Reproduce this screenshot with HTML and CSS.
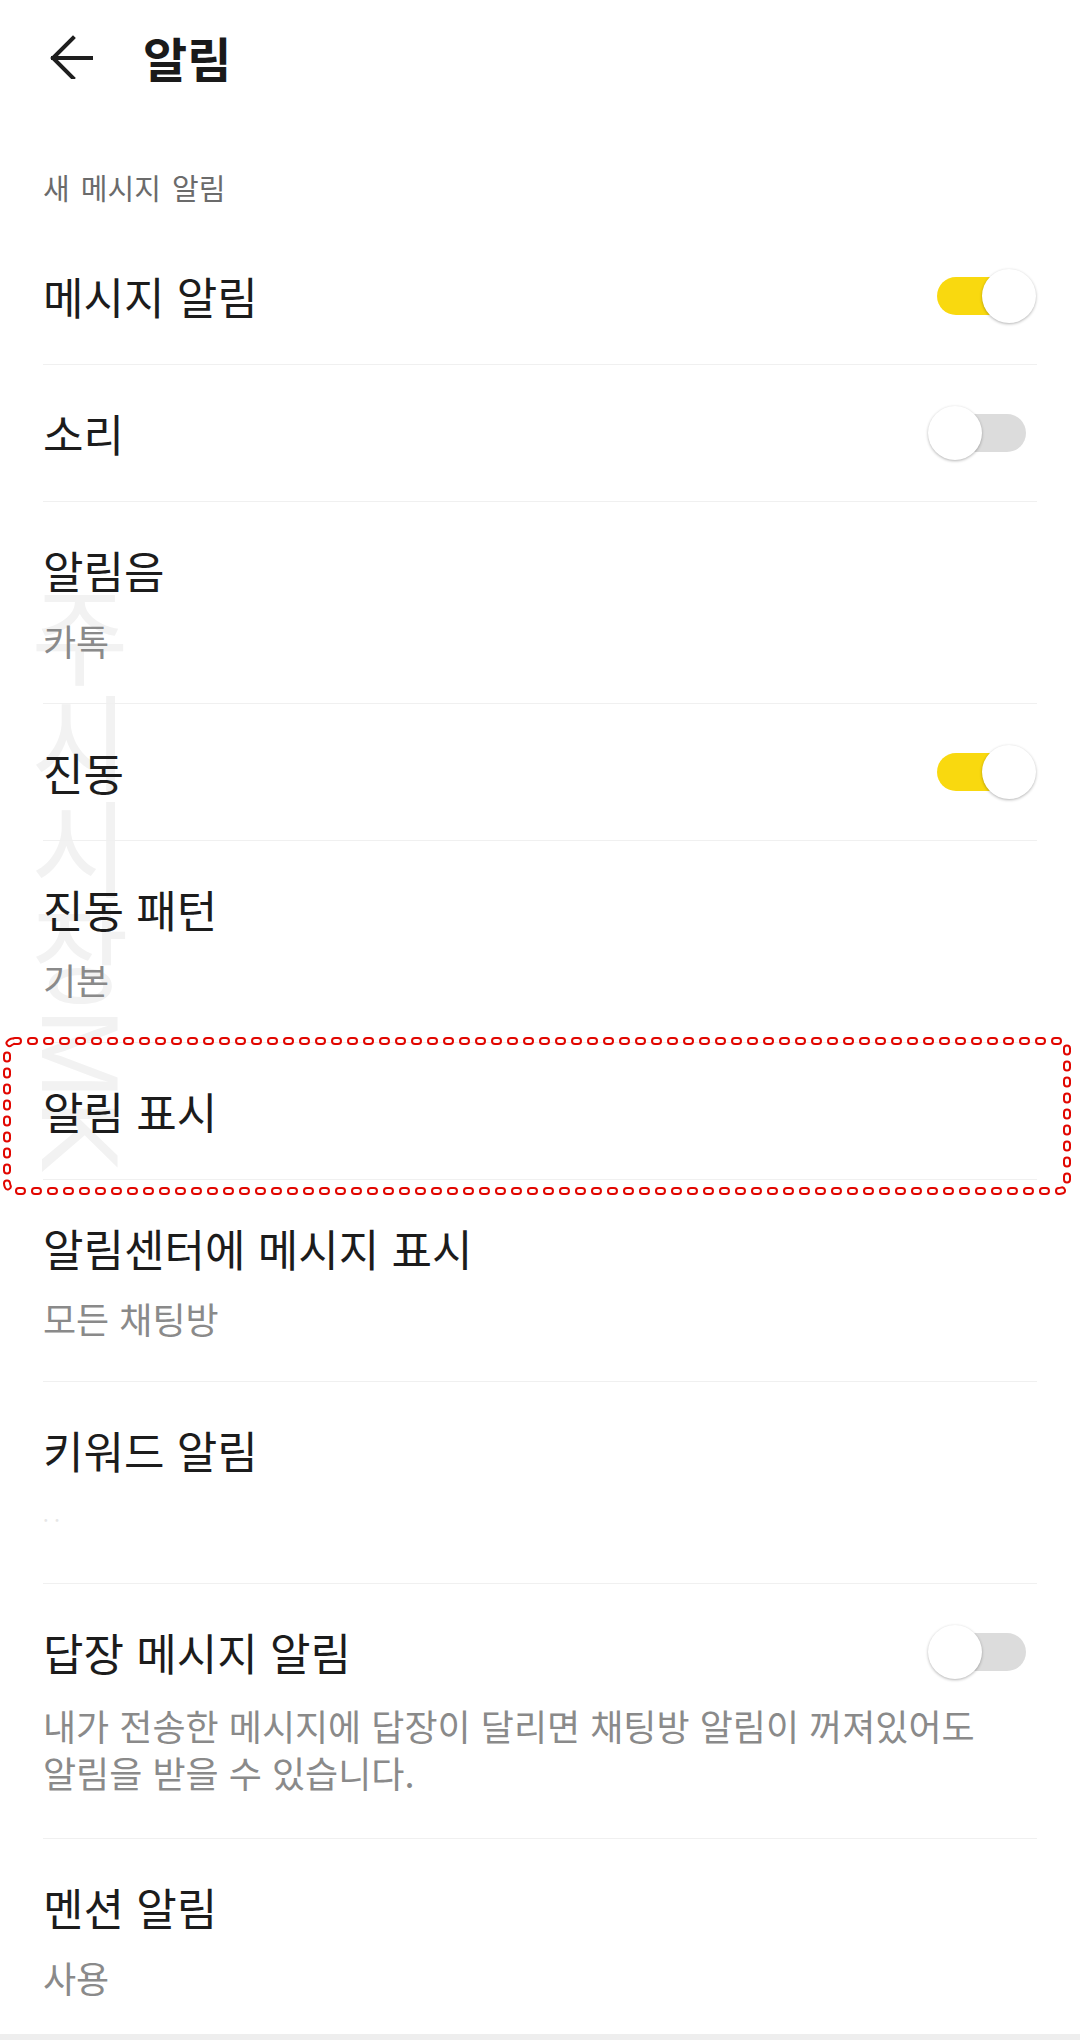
FILE: index.html
```html
<!DOCTYPE html>
<html lang="ko">
<head>
    <meta charset="UTF-8">
    <meta name="viewport" content="width=device-width, initial-scale=1.0">
    <title>알림</title>
    <link rel="stylesheet" href="styles.css">
</head>
<body>
    <div class="watermark">주시시장<span class="wm-latin">MK</span></div>

    <header class="topbar">
        <svg class="back" width="44" height="44" viewBox="0 0 44 44">
            <path d="M4 23 H44 M24 3 L4 23 L24 43" fill="none" stroke="#1e1e1e" stroke-width="4" stroke-linecap="square"/>
        </svg>
        <h1>알림</h1>
    </header>

    <div class="section-label">새 메시지 알림</div>

    <div class="list">
        <div class="row">
            <div class="row-head">
                <span class="title">메시지 알림</span>
                <span class="toggle on"><span class="track"></span><span class="knob"></span></span>
            </div>
        </div>

        <div class="row">
            <div class="row-head">
                <span class="title">소리</span>
                <span class="toggle"><span class="track"></span><span class="knob"></span></span>
            </div>
        </div>

        <div class="row two-line">
            <div class="row-head"><span class="title">알림음</span></div>
            <div class="sub">카톡</div>
        </div>

        <div class="row">
            <div class="row-head">
                <span class="title">진동</span>
                <span class="toggle on"><span class="track"></span><span class="knob"></span></span>
            </div>
        </div>

        <div class="row two-line">
            <div class="row-head"><span class="title">진동 패턴</span></div>
            <div class="sub">기본</div>
        </div>

        <div class="row marked">
            <div class="row-head"><span class="title">알림 표시</span></div>
            <!-- red dotted annotation over this row -->
            <svg class="mark" width="1080" height="160" viewBox="0 0 1080 160">
                <rect x="7" y="4" width="1060" height="150" rx="8" fill="none" stroke="#e10600" stroke-width="8" stroke-dasharray="3 13" stroke-linecap="round"/>
                <rect x="7" y="4" width="1060" height="150" rx="8" fill="none" stroke="#fff" stroke-width="4" stroke-dasharray="3 13" stroke-linecap="round"/>
            </svg>
        </div>

        <div class="row two-line">
            <div class="row-head"><span class="title">알림센터에 메시지 표시</span></div>
            <div class="sub">모든 채팅방</div>
        </div>

        <div class="row two-line">
            <div class="row-head"><span class="title">키워드 알림</span></div>
            <div class="sub faint">&middot; &middot;</div>
        </div>

        <div class="row desc-row">
            <div class="row-head">
                <span class="title">답장 메시지 알림</span>
                <span class="toggle"><span class="track"></span><span class="knob"></span></span>
            </div>
            <div class="desc">내가 전송한 메시지에 답장이 달리면 채팅방 알림이 꺼져있어도 알림을 받을 수 있습니다.</div>
        </div>

        <div class="row two-line last">
            <div class="row-head"><span class="title">멘션 알림</span></div>
            <div class="sub">사용</div>
        </div>
    </div>

    <div class="bottom-bar"></div>
</body>
</html>
```

FILE: styles.css
```css
body {
    margin: 0;
    width: 1080px;
    background: #fff;
    font-family: "Noto Sans CJK KR", "Noto Sans", sans-serif;
    color: #1c1c1c;
    position: relative;
}

.watermark {
    position: absolute;
    left: 25px;
    top: 584px;
    z-index: -1;
    writing-mode: vertical-rl;
    font-size: 106px;
    line-height: 1;
    color: #f2f2f2;
}

.wm-latin {
    font-family: "Liberation Sans", sans-serif;
    font-size: 110px;
}

.topbar {
    height: 114px;
    display: flex;
    align-items: center;
    padding-left: 49px;
}

.back {
    margin-right: 50px;
}

h1 {
    margin: 0;
    font-size: 48px;
    font-weight: 700;
    line-height: 52px;
    color: #1a1a1a;
}

.section-label {
    height: 114px;
    box-sizing: border-box;
    padding: 53px 0 0 43px;
    font-size: 29px;
    line-height: 40px;
    color: #6b6b6b;
    word-spacing: 3px;
}

.list {
    margin: 0 43px;
}

.row {
    padding: 44px 0;
    border-bottom: 1px solid #f0f0f0;
}

.row.two-line {
    padding: 44px 0 39px;
}

.row.desc-row {
    padding: 44px 0 42px;
}

.row.last {
    border-bottom: none;
    padding-bottom: 33px;
}

.row.marked {
    position: relative;
}

.row-head {
    height: 48px;
    display: flex;
    align-items: center;
    justify-content: space-between;
}

.title {
    font-size: 44px;
    line-height: 48px;
    color: #1c1c1c;
}

.sub {
    margin-top: 22px;
    font-size: 36px;
    line-height: 48px;
    color: #8a8a8a;
}

.sub.faint {
    color: #e6e6e6;
    font-size: 20px;
}

.desc {
    margin-top: 26px;
    font-size: 36px;
    line-height: 47px;
    color: #8a8a8a;
    word-break: keep-all;
}

.toggle {
    position: relative;
    width: 108px;
    height: 54px;
    margin: -3px 1px -3px 0;
    flex-shrink: 0;
}

.track {
    position: absolute;
    left: 9px;
    right: 10px;
    top: 8px;
    height: 38px;
    border-radius: 19px;
    background: #dcdcdc;
}

.toggle.on .track {
    background: #f9d90f;
}

.knob {
    position: absolute;
    top: 0;
    left: 0;
    width: 54px;
    height: 54px;
    border-radius: 50%;
    background: #fff;
    box-shadow: 0 1px 3px rgba(0, 0, 0, 0.3);
}

.toggle.on .knob {
    left: 54px;
}

.mark {
    position: absolute;
    left: -43px;
    top: -6px;
}

.bottom-bar {
    height: 6px;
    background: #eeeeee;
}
```
